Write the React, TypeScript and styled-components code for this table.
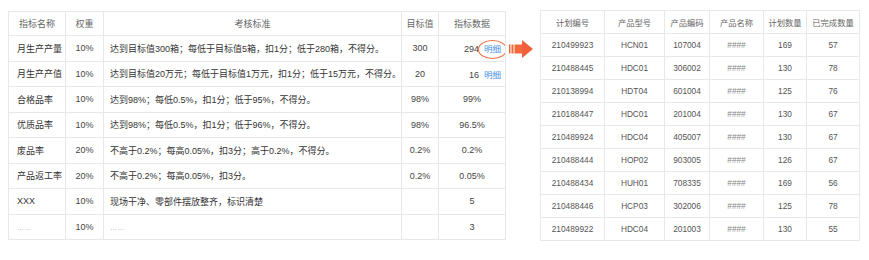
import React from 'react';
import styled, { createGlobalStyle } from 'styled-components';

const GlobalStyle = createGlobalStyle`
  html, body {
    margin: 0;
    padding: 0;
    background: #ffffff;
  }
  body {
    font-family: "Liberation Sans", "Noto Sans CJK SC", sans-serif;
  }
`

const Page = styled.div`
  display: flex;
  align-items: flex-start;
  width: 869px;
  height: 260px;
  box-sizing: border-box;
  padding: 10px 0 0 8px;
`

const Table = styled.table<{ $size: number; $top: number }>`
  border-collapse: collapse;
  table-layout: fixed;
  margin-top: ${p => p.$top}px;
  font-size: ${p => p.$size}px;
`

const HeadCell = styled.th<{ $h: number }>`
  height: ${p => p.$h}px;
  padding: 0;
  border: 1px solid #e8e8e8;
  font-weight: normal;
  color: #666;
  text-align: center;
  white-space: nowrap;
  overflow: hidden;
`

const Cell = styled.td<{ $h: number; $align?: string; $pad?: number; $color?: string }>`
  height: ${p => p.$h}px;
  padding: 0 ${p => p.$pad ?? 0}px;
  border: 1px solid #e8e8e8;
  color: ${p => p.$color ?? '#333'};
  text-align: ${p => p.$align ?? 'center'};
  white-space: nowrap;
  overflow: hidden;
`

const Faint = styled.span`
  color: #999;
  font-size: 7px;
  letter-spacing: 0.5px;
`

const DetailLink = styled.span`
  position: relative;
  margin-left: 5px;
  color: #3f8fe6;
  font-size: 8.5px;
`

const Circle = styled.span`
  position: absolute;
  left: -6px;
  right: -6px;
  top: -4px;
  bottom: -5px;
  border: 1px solid #f0683c;
  border-radius: 50%;
`

const ArrowSlot = styled.div`
  width: 34px;
  padding: 30px 0 0 3px;
  box-sizing: border-box;
  flex-shrink: 0;
`

const leftCols = [57, 38, 298, 37, 67]
const rightCols = [64, 60, 45, 54, 43, 53]

const leftHead = ['指标名称', '权重', '考核标准', '目标值', '指标数据']
const leftRows: { name: string; weight: string; rule: string; target: string; value: string; detail?: 'circled' | 'plain' }[] = [
  { name: '月生产产量', weight: '10%', rule: '达到目标值300箱；每低于目标值5箱，扣1分；低于280箱，不得分。', target: '300', value: '294', detail: 'circled' },
  { name: '月生产产值', weight: '10%', rule: '达到目标值20万元；每低于目标值1万元，扣1分；低于15万元，不得分。', target: '20', value: '16', detail: 'plain' },
  { name: '合格品率', weight: '10%', rule: '达到98%；每低0.5%，扣1分；低于95%，不得分。', target: '98%', value: '99%' },
  { name: '优质品率', weight: '10%', rule: '达到98%；每低0.5%，扣1分；低于96%，不得分。', target: '98%', value: '96.5%' },
  { name: '废品率', weight: '20%', rule: '不高于0.2%；每高0.05%，扣3分；高于0.2%，不得分。', target: '0.2%', value: '0.2%' },
  { name: '产品返工率', weight: '20%', rule: '不高于0.2%；每高0.05%，扣3分。', target: '0.2%', value: '0.05%' },
  { name: 'XXX', weight: '10%', rule: '现场干净、零部件摆放整齐，标识清楚', target: '', value: '5' },
  { name: '……', weight: '10%', rule: '……', target: '', value: '3' },
]

const rightHead = ['计划编号', '产品型号', '产品编码', '产品名称', '计划数量', '已完成数量']
const rightRows = [
  ['210499923', 'HCN01', '107004', '####', '169', '57'],
  ['210488445', 'HDC01', '306002', '####', '130', '78'],
  ['210138994', 'HDT04', '601004', '####', '125', '76'],
  ['210188447', 'HDC01', '201004', '####', '130', '67'],
  ['210489924', 'HDC04', '405007', '####', '130', '67'],
  ['210488444', 'HOP02', '903005', '####', '126', '67'],
  ['210488434', 'HUH01', '708335', '####', '169', '56'],
  ['210488446', 'HCP03', '302006', '####', '125', '78'],
  ['210489922', 'HDC04', '201003', '####', '130', '55'],
]

const Arrow = () => (
  <svg width="24" height="18" viewBox="0 0 24 18">
    <rect x="0" y="4.5" width="1.5" height="9" fill="#f26a3c" />
    <rect x="2.5" y="4.5" width="2" height="9" fill="#f26a3c" />
    <rect x="5.5" y="4.5" width="8" height="9" fill="#f26a3c" />
    <polygon points="13,0 24,9 13,18" fill="#f0603a" />
  </svg>
)

function App() {
  return <Page>
    <GlobalStyle />
    <Table $size={9} $top={1} style={{ width: leftCols.reduce((a, b) => a + b, 0) }}>
      <colgroup>
        {leftCols.map((w, i) => <col key={i} style={{ width: w }} />)}
      </colgroup>
      <thead>
        <tr>
          {leftHead.map(h => <HeadCell key={h} $h={23}>{h}</HeadCell>)}
        </tr>
      </thead>
      <tbody>
        {leftRows.map((r, i) =>
          <tr key={i}>
            <Cell $h={24.5} $align="left" $pad={8}>{r.name === '……' ? <Faint>……</Faint> : r.name}</Cell>
            <Cell $h={24.5} $color="#444">{r.weight}</Cell>
            <Cell $h={24.5} $align="left" $pad={6}>{r.rule === '……' ? <Faint>……</Faint> : r.rule}</Cell>
            <Cell $h={24.5} $color="#444">{r.target}</Cell>
            {r.detail
              ? <Cell $h={24.5} $align="right" $pad={4} $color="#444">
                  {r.value}
                  <DetailLink>
                    明细
                    {r.detail === 'circled' && <Circle />}
                  </DetailLink>
                </Cell>
              : <Cell $h={24.5} $color="#444">{r.value}</Cell>}
          </tr>
        )}
      </tbody>
    </Table>
    <ArrowSlot>
      <Arrow />
    </ArrowSlot>
    <Table $size={8.3} $top={0} style={{ width: rightCols.reduce((a, b) => a + b, 0) }}>
      <colgroup>
        {rightCols.map((w, i) => <col key={i} style={{ width: w }} />)}
      </colgroup>
      <thead>
        <tr>
          {rightHead.map(h => <HeadCell key={h} $h={22}>{h}</HeadCell>)}
        </tr>
      </thead>
      <tbody>
        {rightRows.map((r, i) =>
          <tr key={i}>
            {r.map((v, j) =>
              <Cell key={j} $h={22} $color={j === 3 ? '#888' : '#555'}>{v}</Cell>
            )}
          </tr>
        )}
      </tbody>
    </Table>
  </Page>
}

export default App;
